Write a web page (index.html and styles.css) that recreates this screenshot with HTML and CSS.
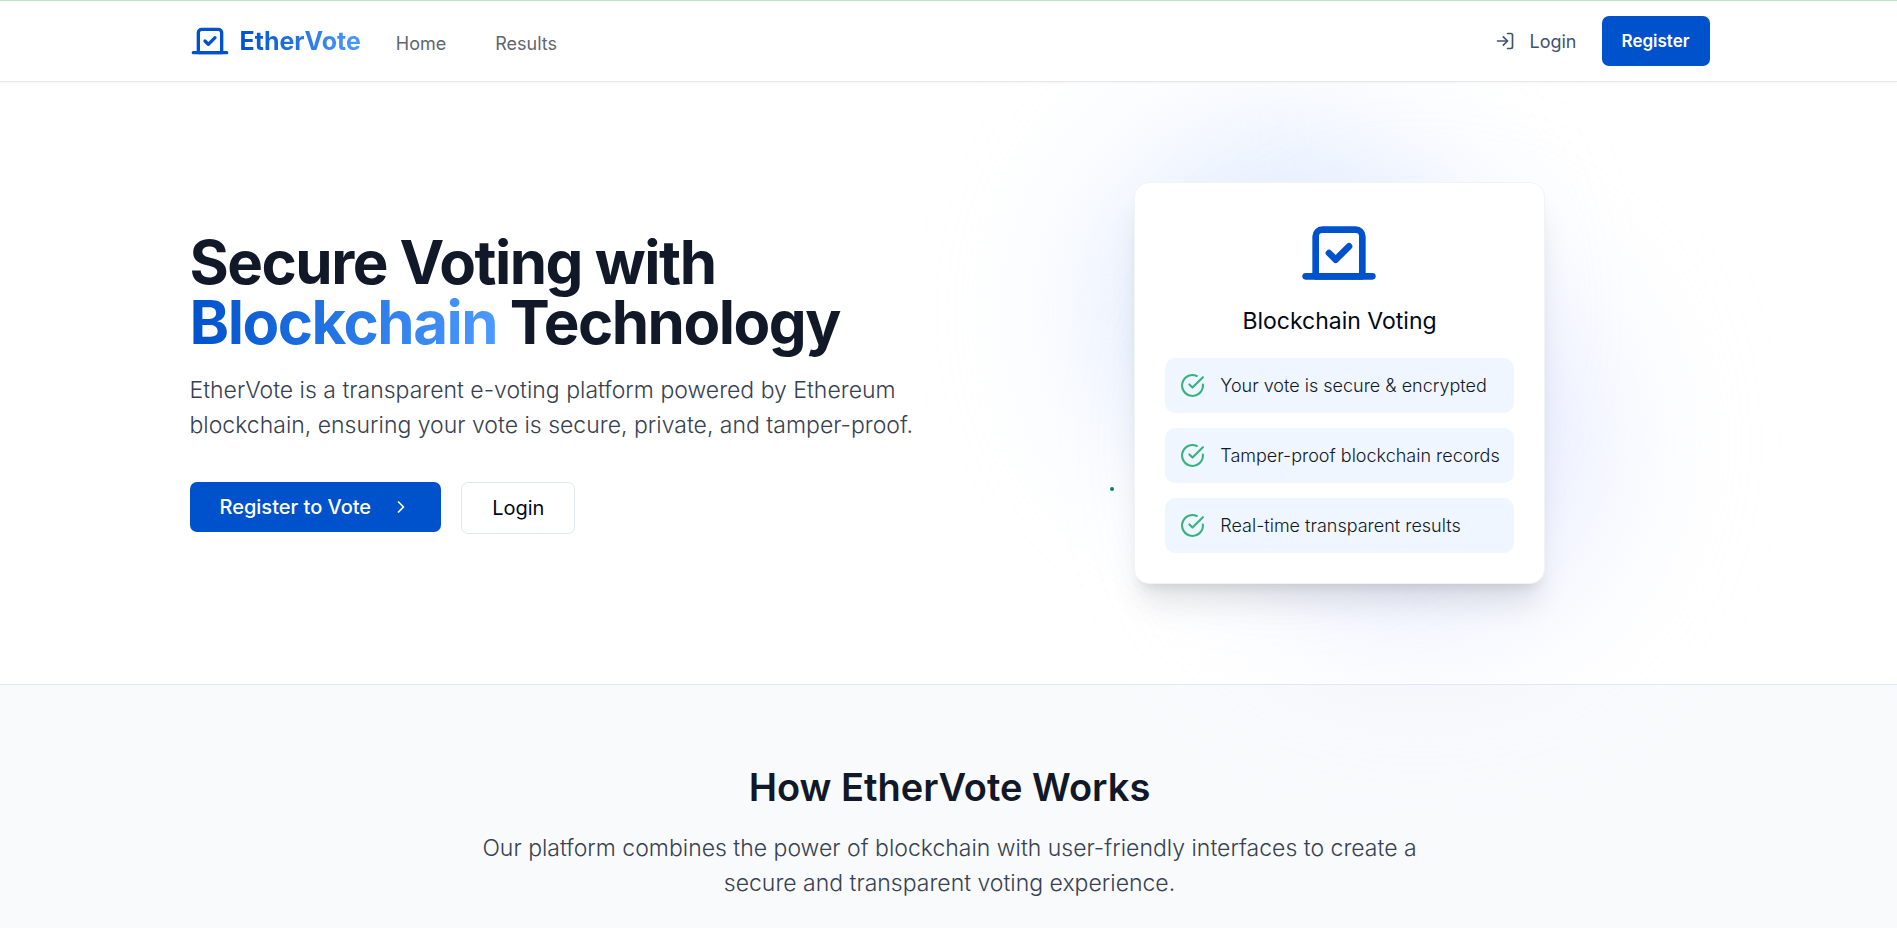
FILE: index.html
```html
<!DOCTYPE html>
<html lang="en">
<head>
<meta charset="utf-8">
<meta name="viewport" content="width=device-width, initial-scale=1">
<title>EtherVote</title>
<link rel="stylesheet" href="styles.css">
</head>
<body>
<svg class="sprite" aria-hidden="true">
  <symbol id="vote" viewBox="0 0 24 24"><path d="m9 12 2 2 4-4"/><path d="M5 7c0-1.1.9-2 2-2h10a2 2 0 0 1 2 2v12H5V7Z"/><path d="M22 19H2"/></symbol>
  <symbol id="check" viewBox="0 0 24 24"><path d="M22 11.08V12a10 10 0 1 1-5.93-9.14"/><path d="m9 11 3 3L22 4"/></symbol>
</svg>
<header class="header">
  <nav class="container nav">
    <a class="brand" href="#"><svg class="icon brand-icon" aria-hidden="true"><use href="#vote"/></svg><span class="brand-name gradient">EtherVote</span></a>
    <div class="nav-links">
      <a class="nav-link" href="#">Home</a>
      <a class="nav-link" href="#">Results</a>
    </div>
    <div class="nav-actions">
      <a class="nav-login" href="#"><svg class="icon small-icon" viewBox="0 0 24 24" aria-hidden="true"><path d="M15 3h4a2 2 0 0 1 2 2v14a2 2 0 0 1-2 2h-4"/><path d="m10 17 5-5-5-5"/><path d="M15 12H3"/></svg>Login</a>
      <button class="button primary nav-register" type="button">Register</button>
    </div>
  </nav>
</header>
<main class="main">
  <section class="hero">
    <div class="container hero-grid">
      <div class="hero-copy">
        <h1 class="hero-title">Secure Voting with<br><span class="gradient">Blockchain</span> Technology</h1>
        <p class="lead">EtherVote is a transparent e-voting platform powered by Ethereum blockchain, ensuring your vote is secure, private, and tamper-proof.</p>
        <div class="hero-actions">
          <button class="button primary large" type="button">Register to Vote<svg class="icon small-icon" viewBox="0 0 24 24" aria-hidden="true"><path d="m9 18 6-6-6-6"/></svg></button>
          <button class="button outline large" type="button">Login</button>
        </div>
      </div>
      <div class="hero-visual">
        <div class="stage">
          <span class="blob blob-blue"></span>
          <span class="blob blob-indigo"></span>
          <span class="dot"></span>
          <div class="card">
            <svg class="icon card-icon" aria-hidden="true"><use href="#vote"/></svg>
            <h2 class="card-title">Blockchain Voting</h2>
            <ul class="points">
              <li class="point"><svg class="icon point-icon" aria-hidden="true"><use href="#check"/></svg>Your vote is secure &amp; encrypted</li>
              <li class="point"><svg class="icon point-icon" aria-hidden="true"><use href="#check"/></svg>Tamper-proof blockchain records</li>
              <li class="point"><svg class="icon point-icon" aria-hidden="true"><use href="#check"/></svg>Real-time transparent results</li>
            </ul>
          </div>
        </div>
      </div>
    </div>
  </section>
  <section class="works">
    <h2 class="works-title">How EtherVote Works</h2>
    <p class="lead works-lead">Our platform combines the power of blockchain with user-friendly interfaces to create a secure and transparent voting experience.</p>
  </section>
</main>
</body>
</html>
```
FILE: styles.css
```css
*, *::before, *::after { box-sizing: border-box; }
body {
  margin: 0;
  min-height: 100vh;
  display: flex;
  flex-direction: column;
  font-family: Inter, "Liberation Sans", sans-serif;
  color: #020817;
  background: #fff;
  overflow-x: hidden;
}
h1, h2, p, ul { margin: 0; padding: 0; }
a { color: inherit; text-decoration: none; }
.sprite { display: none; }
.icon { flex: none; fill: none; stroke: currentColor; stroke-width: 2; stroke-linecap: round; stroke-linejoin: round; }
.small-icon { width: 20px; height: 20px; }
.container { width: 100%; max-width: 1600px; margin: 0 auto; padding: 0 39px 0 41px; }
.gradient {
  display: inline-block;
  color: transparent;
  background: linear-gradient(90deg, #0052cc, #4c9aff);
  -webkit-background-clip: text;
  background-clip: text;
}

.header {
  position: relative;
  z-index: 10;
  background: #fff;
  border-top: 1px solid #c1e0c4;
  border-bottom: 1px solid #e5e7eb;
  box-shadow: 0 1px 2px rgba(0, 0, 0, 0.04);
}
.nav { display: flex; align-items: center; height: 80px; }
.brand { display: flex; align-items: center; gap: 10px; color: #0052cc; }
.brand-icon { width: 40px; height: 40px; }
.brand-name { font-size: 25px; line-height: 35px; font-weight: 700; }
.nav-links { display: flex; gap: 49px; margin-left: 35px; padding-top: 4px; }
.nav-link { font-size: 18px; line-height: 25px; font-weight: 400; color: #5f6673; }
.nav-actions { display: flex; align-items: center; gap: 25px; margin-left: auto; }
.nav-login { display: flex; align-items: center; gap: 15px; font-size: 18px; line-height: 25px; font-weight: 400; color: #42526e; }

.button {
  display: inline-flex;
  align-items: center;
  justify-content: center;
  gap: 20px;
  border: 0;
  border-radius: 7px;
  font-family: inherit;
  cursor: pointer;
}
.primary { background: #0052cc; color: #fff; font-weight: 600; }
.outline { background: #fff; color: #020817; font-weight: 400; border: 1px solid #e2e8f0; }
.nav-register { height: 50px; padding: 0 20px; font-size: 17px; }
.large { height: 50px; padding: 0 30px; font-size: 20px; }
.primary.large { font-weight: 500; }
.outline.large { height: 52px; }

.main { flex: 1; display: flex; flex-direction: column; }
.hero { padding: 100px 0; }
.hero-grid { display: grid; grid-template-columns: 1fr 1fr; gap: 40px; align-items: center; }
.hero-title { font-size: 60px; line-height: 60px; font-weight: 700; letter-spacing: -0.025em; color: #111827; }
.lead { font-size: 23px; line-height: 35px; font-weight: 300; color: #374151; }
.hero-copy .lead { margin-top: 21px; }
.hero-actions { display: flex; align-items: flex-start; gap: 20px; margin-top: 39px; }
.hero-visual { display: flex; justify-content: center; }
.stage { position: relative; }
.blob { position: absolute; width: 360px; height: 360px; border-radius: 50%; filter: blur(80px); }
.blob-blue { top: -50px; left: -35px; background: rgba(219, 232, 254, 0.85); }
.blob-indigo { top: 80px; right: -55px; background: rgba(224, 230, 255, 0.8); }
.dot { position: absolute; top: 305px; left: -24px; width: 4px; height: 4px; border-radius: 50%; background: #00875a; }
.card {
  position: relative;
  display: flex;
  flex-direction: column;
  align-items: center;
  min-width: 408px;
  padding: 30px;
  background: #fff;
  border: 1px solid #f1f3f6;
  border-radius: 15px;
  box-shadow: 0 25px 31px -6px rgba(0, 0, 0, 0.1), 0 10px 12px -7px rgba(0, 0, 0, 0.1);
}
.card-icon { width: 80px; height: 80px; color: #0052cc; }
.card-title { margin-top: 11px; font-size: 23px; line-height: 35px; font-weight: 400; }
.points { display: grid; gap: 15px; width: 100%; margin-top: 19px; list-style: none; }
.point { display: flex; align-items: center; gap: 15px; padding: 15px 14px 15px 15px; border-radius: 10px; background: #eff6ff; font-size: 18px; line-height: 25px; font-weight: 300; color: #111827; }
.point-icon { width: 25px; height: 25px; color: #36b37e; }

.works { flex: 1; padding: 80px 39px 20px 41px; border-top: 1px solid #e2e8f0; background: #f9fafc; text-align: center; }
.works-title { font-size: 38px; line-height: 45px; font-weight: 600; color: #111827; }
.works-lead { max-width: 960px; margin: 21px auto 0; }
```
